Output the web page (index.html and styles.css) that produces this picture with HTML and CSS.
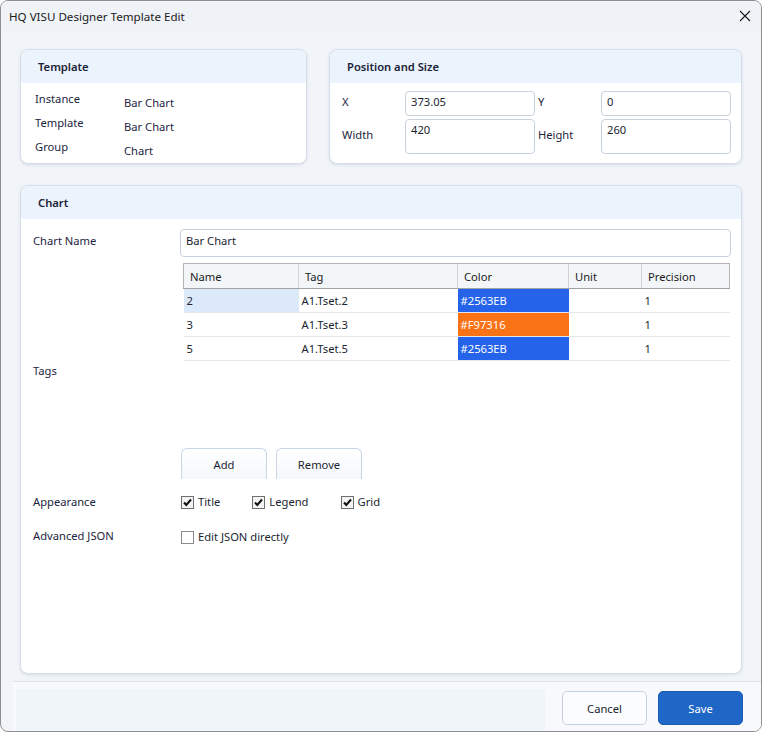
FILE: index.html
```html
<!DOCTYPE html>
<html lang="en">
<head>
    <meta charset="UTF-8">
    <meta name="viewport" content="width=device-width, initial-scale=1.0">
    <title>HQ VISU Designer Template Edit</title>
    <link rel="stylesheet" href="styles.css">
</head>
<body>
    <div class="window">
        <div class="titlebar">
            <span class="title">HQ VISU Designer Template Edit</span>
            <span class="close">
                <svg width="12" height="12" viewBox="0 0 12 12"><path d="M1 1L11 11M11 1L1 11" stroke="#1a1a1a" stroke-width="1.1"/></svg>
            </span>
        </div>

        <div class="content">
            <div class="top-row">
                <section class="card">
                    <div class="card-header">Template</div>
                    <div class="info-grid">
                        <span class="info-label">Instance</span><span class="info-value">Bar Chart</span>
                        <span class="info-label">Template</span><span class="info-value">Bar Chart</span>
                        <span class="info-label">Group</span><span class="info-value">Chart</span>
                    </div>
                </section>

                <section class="card">
                    <div class="card-header">Position and Size</div>
                    <div class="pos-grid">
                        <span class="pos-label">X</span><div class="field">373.05</div>
                        <span class="pos-label pos-label-right">Y</span><div class="field">0</div>
                        <span class="pos-label">Width</span><div class="field">420</div>
                        <span class="pos-label pos-label-right">Height</span><div class="field">260</div>
                    </div>
                </section>
            </div>

            <section class="card card-chart">
                <div class="card-header">Chart</div>
                <div class="chart-grid">
                    <span class="form-label label-name">Chart Name</span>
                    <div class="field field-name">Bar Chart</div>

                    <span class="form-label label-tags">Tags</span>
                    <div class="tags">
                        <div class="tag-list">
                            <table class="tag-table">
                                <colgroup>
                                    <col style="width:115px"><col style="width:159px"><col style="width:111px"><col style="width:73px"><col style="width:88px">
                                </colgroup>
                                <thead>
                                    <tr><th>Name</th><th>Tag</th><th>Color</th><th>Unit</th><th>Precision</th></tr>
                                </thead>
                                <tbody>
                                    <tr><td class="selected">2</td><td>A1.Tset.2</td><td class="swatch" style="background:#2563EB">#2563EB</td><td></td><td>1</td></tr>
                                    <tr><td>3</td><td>A1.Tset.3</td><td class="swatch" style="background:#F97316">#F97316</td><td></td><td>1</td></tr>
                                    <tr><td>5</td><td>A1.Tset.5</td><td class="swatch" style="background:#2563EB">#2563EB</td><td></td><td>1</td></tr>
                                </tbody>
                            </table>
                        </div>
                        <div class="tag-buttons">
                            <button class="tab-button">Add</button>
                            <button class="tab-button">Remove</button>
                        </div>
                    </div>

                    <span class="form-label label-check">Appearance</span>
                    <div class="checks">
                        <label class="check"><svg class="box" width="13" height="13" viewBox="0 0 13 13"><rect x="0.5" y="0.5" width="12" height="12" fill="#f4f4f4" stroke="#6f6f6f"/><path d="M3 6.5L5.3 9L10 3.5" fill="none" stroke="#111" stroke-width="2"/></svg>Title</label>
                        <label class="check"><svg class="box" width="13" height="13" viewBox="0 0 13 13"><rect x="0.5" y="0.5" width="12" height="12" fill="#f4f4f4" stroke="#6f6f6f"/><path d="M3 6.5L5.3 9L10 3.5" fill="none" stroke="#111" stroke-width="2"/></svg>Legend</label>
                        <label class="check"><svg class="box" width="13" height="13" viewBox="0 0 13 13"><rect x="0.5" y="0.5" width="12" height="12" fill="#f4f4f4" stroke="#6f6f6f"/><path d="M3 6.5L5.3 9L10 3.5" fill="none" stroke="#111" stroke-width="2"/></svg>Grid</label>
                    </div>

                    <span class="form-label label-json">Advanced JSON</span>
                    <div class="checks checks-json">
                        <label class="check"><svg class="box" width="13" height="13" viewBox="0 0 13 13"><rect x="0.5" y="0.5" width="12" height="12" fill="#fff" stroke="#8a8a8a"/></svg>Edit JSON directly</label>
                    </div>
                </div>
            </section>
        </div>

        <div class="footer">
            <div class="status"></div>
            <div class="footer-buttons">
                <button class="button">Cancel</button>
                <button class="button button-primary">Save</button>
            </div>
        </div>
    </div>
</body>
</html>
```

FILE: styles.css
```css
body {
    margin: 0;
    padding: 0;
    font-family: "Noto Sans", "Open Sans", sans-serif;
    font-size: 11.2px;
    color: #1c2540;
    background: #ffffff;
}
.window {
    width: 762px;
    height: 732px;
    box-sizing: border-box;
    border: 1px solid #8f8f8f;
    border-radius: 8px;
    overflow: hidden;
    background: #f1f5fa;
    display: flex;
    flex-direction: column;
}
.titlebar {
    height: 30px;
    background: #eff2f7;
    display: flex;
    align-items: center;
    justify-content: space-between;
    padding: 0 10px 0 8px;
    flex-shrink: 0;
}
.title {
    font-size: 11.6px;
    color: #1a1a1a;
}
.close {
    display: flex;
    align-items: center;
}
.content {
    padding: 18px 19px 7px 19px;
    display: flex;
    flex-direction: column;
    gap: 21px;
}
.top-row {
    display: grid;
    grid-template-columns: 287px 1fr;
    gap: 22px;
    height: 115px;
}
.card {
    background: #ffffff;
    border: 1px solid #d6dee8;
    border-radius: 8px;
    box-shadow: 0 1px 3px rgba(30, 50, 80, 0.12);
    overflow: hidden;
}
.card-header {
    height: 33px;
    line-height: 33px;
    background: #ebf3fd;
    padding-left: 17px;
    font-weight: 600;
    color: #1a2236;
}
.info-grid {
    display: grid;
    grid-template-columns: 89px 1fr;
    grid-auto-rows: 24px;
    padding: 7px 14px 0 14px;
}
.info-label {
    line-height: 18px;
}
.info-value {
    line-height: 18px;
    padding-top: 4px;
}
.pos-grid {
    display: grid;
    grid-template-columns: 63px 130px 66px 130px;
    grid-template-rows: 25px 35px;
    row-gap: 3px;
    padding: 8px 10px 0 12px;
}
.pos-label {
    align-self: center;
    padding-bottom: 4px;
}
.pos-label-right {
    padding-left: 3px;
}
.field {
    box-sizing: border-box;
    border: 1px solid #c8d2de;
    border-radius: 4px;
    padding: 1px 5px;
    line-height: 18px;
    color: #1a1f30;
    background: #ffffff;
}
.card-chart {
    height: 489px;
    box-sizing: border-box;
}
.chart-grid {
    display: grid;
    grid-template-columns: 147px 1fr;
    padding: 10px 10px 0 12px;
}
.form-label {
    line-height: 18px;
}
.label-name {
    padding-top: 3px;
}
.field-name {
    height: 28px;
    padding: 2px 5px;
}
.label-tags {
    align-self: center;
    padding-top: 6px;
}
.tags {
    padding-top: 6px;
}
.tag-list {
    height: 177px;
    margin-left: 3px;
    width: 546px;
}
.tag-table {
    border-collapse: collapse;
    table-layout: fixed;
    width: 546px;
}
.tag-table th {
    height: 24px;
    background: #f3f6f9;
    font-weight: normal;
    text-align: left;
    padding: 0 6px;
    color: #1a1a1a;
    border-top: 1px solid #b4b4b4;
    border-bottom: 1px solid #a2a2a2;
    border-left: 1px solid #d2d2d2;
}
.tag-table th:first-child {
    border-left: 1px solid #b4b4b4;
}
.tag-table th:last-child {
    border-right: 1px solid #b4b4b4;
}
.tag-table td {
    height: 23px;
    padding: 0 3px;
    border-bottom: 1px solid #e4e7eb;
    color: #1a1f30;
}
.tag-table td.selected {
    background: #dce9fb;
}
.tag-table td.swatch {
    color: #ffffff;
}
.tag-buttons {
    display: flex;
    gap: 9px;
    margin-top: 8px;
    margin-left: 1px;
}
.tab-button {
    width: 86px;
    height: 31px;
    font-family: inherit;
    font-size: 11.2px;
    color: #1a1f30;
    background: linear-gradient(#ffffff, #f4f7fb);
    border: 1px solid #c9d5e3;
    border-bottom: none;
    border-radius: 6px 6px 0 0;
    padding: 0;
}
.label-check {
    margin-top: 14px;
}
.checks {
    display: flex;
    gap: 32px;
    margin-top: 14px;
    margin-left: 1px;
}
.label-json {
    margin-top: 16px;
}
.checks-json {
    margin-top: 17px;
}
.check {
    display: flex;
    align-items: center;
    gap: 4px;
    line-height: 18px;
    color: #1a1f30;
}
.footer {
    flex: 1;
    margin-left: 12px;
    border-top: 1px solid #dde4ec;
    background: #f7f9fc;
    display: flex;
    padding: 7px 18px 0 3px;
}
.status {
    flex: 1;
    background: #f0f5fa;
}
.footer-buttons {
    display: flex;
    gap: 11px;
    margin-left: 17px;
    padding-top: 2px;
}
.button {
    width: 85px;
    height: 34px;
    font-family: inherit;
    font-size: 11.2px;
    color: #1a1f30;
    background: #fbfcfe;
    border: 1px solid #c3d0df;
    border-radius: 5px;
    padding: 0;
}
.button-primary {
    background: #1e67c6;
    border-color: #1a5db5;
    color: #ffffff;
}
```
